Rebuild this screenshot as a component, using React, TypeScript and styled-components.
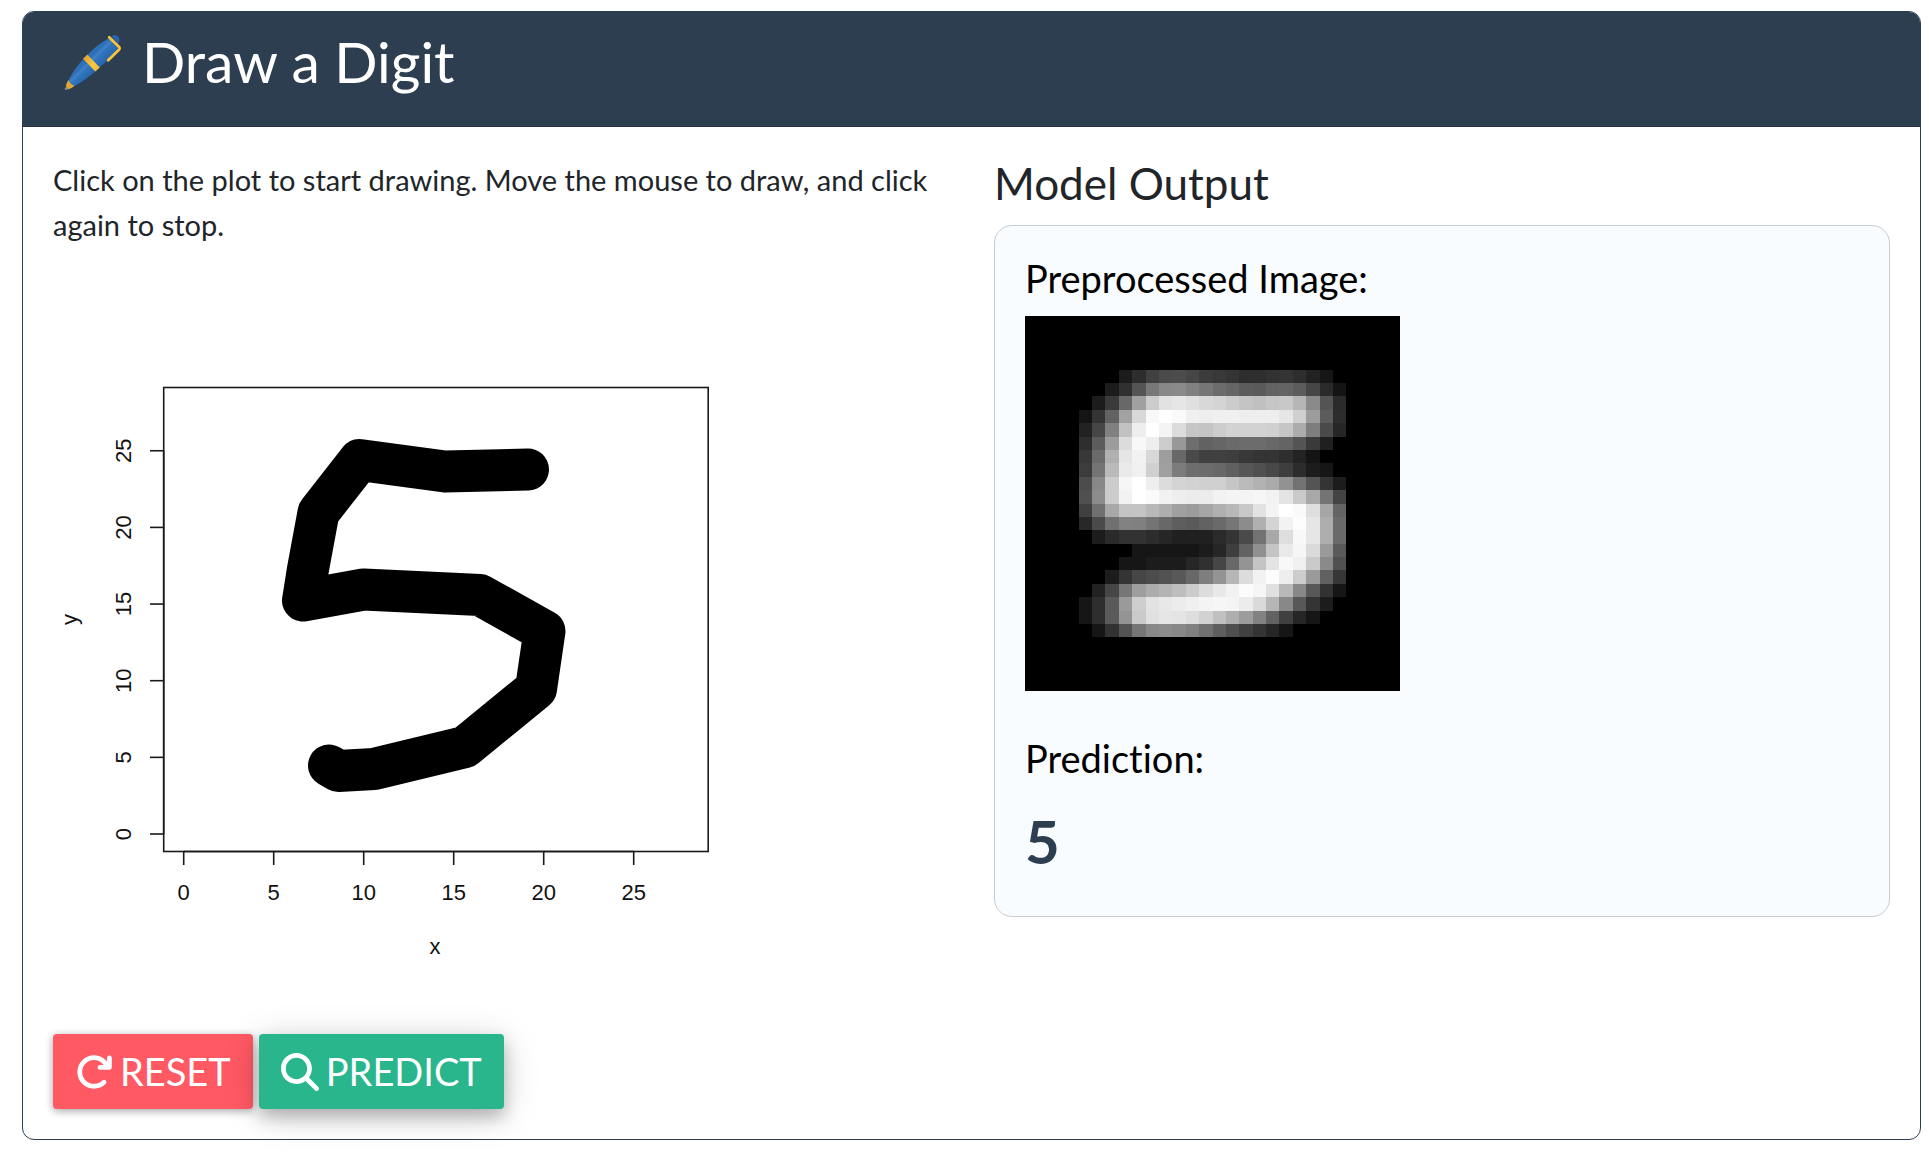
import React from "react";
import styled, { createGlobalStyle } from "styled-components";
import { FaArrowRotateRight, FaMagnifyingGlass } from "react-icons/fa6";

const GlobalStyle = createGlobalStyle`
  *, *::before, *::after { box-sizing: border-box; }
  body {
    margin: 0;
    background: #ffffff;
    color: #212529;
    font-family: Lato, "Open Sans", sans-serif;
    font-size: 29px;
    font-variant-ligatures: none;
    line-height: 45px;
  }
`;

const Page = styled.main`
  padding: 11px 8px 12px 22px;
`;

const Card = styled.section`
  border: 1px solid #2c3e50;
  border-radius: 12px;
`;

const CardHeader = styled.header`
  display: flex;
  align-items: center;
  gap: 18px;
  padding: 16px 37px 31px;
  border-bottom: 1px solid #263445;
  border-radius: 11px 11px 0 0;
  background: #2c3e50;
  color: #ffffff;
`;

const Title = styled.h1`
  margin: 0;
  font-size: 57px;
  font-weight: 400;
  line-height: 67px;
`;

const CardBody = styled.div`
  display: grid;
  grid-template-columns: repeat(2, minmax(0, 1fr));
  column-gap: 45px;
  padding: 30px;

  @media (max-width: 1000px) {
    grid-template-columns: minmax(0, 1fr);
    row-gap: 45px;
  }
`;

const Hint = styled.p`
  margin: 0 0 30px;
`;

const Plot = styled.svg`
  display: block;
  width: 100%;
  max-width: 712px;
  margin-bottom: 45px;
  cursor: crosshair;

  text {
    font-family: "Liberation Sans", Arial, sans-serif;
    font-size: 22px;
    text-anchor: middle;
    fill: #111111;
  }
`;

const Actions = styled.div`
  display: flex;
  flex-wrap: wrap;
  gap: 6px;
`;

const ActionButton = styled.button<{ $color: string; $raised?: boolean }>`
  display: flex;
  align-items: center;
  gap: 7px;
  padding: 15px 22px;
  border: 0;
  border-radius: 4px;
  background: ${(p) => p.$color};
  color: #ffffff;
  font-family: inherit;
  font-size: 38px;
  line-height: 45px;
  text-transform: uppercase;
  cursor: pointer;
  box-shadow: ${(p) =>
    p.$raised
      ? "0 8px 16px rgba(0, 0, 0, 0.22), 0 6px 36px rgba(0, 0, 0, 0.18)"
      : "0 2px 9px rgba(0, 0, 0, 0.36)"};
`;

const OutputHeading = styled.h2`
  margin: 0 0 16px;
  font-size: 44px;
  font-weight: 400;
  line-height: 52px;
`;

const Panel = styled.div`
  padding: 30px 30px 39px;
  border: 1px solid #c8ccd0;
  border-radius: 18px;
  background: #f8fcff;
  color: #000000;
`;

const PanelLabel = styled.h3`
  margin: 0;
  font-size: 38px;
  font-weight: 400;
  line-height: 45px;
`;

const DigitImage = styled.svg`
  display: block;
  width: 375px;
  max-width: 100%;
  margin: 15px 0 45px;
  background: #000000;
`;

const Result = styled.output`
  display: block;
  margin-top: 24px;
  color: #2c3e50;
  font-size: 60px;
  font-weight: 700;
  line-height: 72px;
`;

const PenIcon = () => (
  <svg width="64" height="64" viewBox="0 0 64 64" aria-hidden="true">
    <defs>
      <linearGradient id="barrel" x1="26" y1="24" x2="40" y2="38" gradientUnits="userSpaceOnUse">
        <stop offset="0" stopColor="#2b6cb5" />
        <stop offset="0.3" stopColor="#2d70b9" />
        <stop offset="0.42" stopColor="#4380c6" />
        <stop offset="0.56" stopColor="#2f74bd" />
        <stop offset="1" stopColor="#2566ac" />
      </linearGradient>
      <linearGradient id="gold" x1="25" y1="27" x2="38" y2="40" gradientUnits="userSpaceOnUse">
        <stop offset="0" stopColor="#e0a52f" />
        <stop offset="0.6" stopColor="#fbc940" />
        <stop offset="1" stopColor="#f0b936" />
      </linearGradient>
    </defs>
    <path d="M6.5 56.5 L9 59 L5.8 60 Q4.2 60 4.8 58.4 Z" fill="#8d8593" />
    <path d="M8.5 50 Q5.6 54 6.2 57.2 L8.4 59.2 Q12 58.6 15 55.6 Z" fill="#dfa735" />
    <path d="M51.5 6.5 Q56 3.5 58.4 7 Q60.6 10 58 13.5 Z" fill="#2566ac" />
    <path
      d="M8.5 50 Q15 38 23.3 29.3 L27.3 25 Q36 15.5 48.6 8.3 L58 18 Q50.5 28.5 39.3 37.7 L35.3 41.3 Q26 50 15 55.8 Q10 54.5 8.5 50 Z"
      fill="url(#barrel)"
    />
    <path d="M27.3 24.6 L39.8 37.6 L35.4 41.6 L23 28.8 Z" fill="url(#gold)" />
    <path
      d="M49.2 7.2 L59.3 17.3 Q60 18.4 59.2 19.4 L48.2 30.2"
      fill="none"
      stroke="#f9c33c"
      strokeWidth="2.8"
      strokeLinejoin="round"
      strokeLinecap="round"
    />
  </svg>
);

const TICKS = [0, 5, 10, 15, 20, 25];
const xAt = (value: number) => 130.7 + value * 18;
const yAt = (value: number) => 557 - value * 15.33;

const STROKE_POINTS =
  "475,192.5 392,194.5 306.5,183 265.5,235.5 255,292 250,323.5 310.5,312.5 427,318 491.5,354 483,412 412,470 321,492 285.5,494 276,488.5";

const DrawingPlot = () => (
  <Plot viewBox="0 0 712 712" role="img" aria-label="Drawing area">
    <rect x="110.7" y="110.5" width="544.5" height="464" fill="none" stroke="#1a1a1a" strokeWidth="1.6" />
    <g stroke="#1a1a1a" strokeWidth="1.6">
      <line x1={xAt(0)} x2={xAt(25)} y1="574.5" y2="574.5" />
      <line x1="110.7" x2="110.7" y1={yAt(0)} y2={yAt(25)} />
      {TICKS.map((t) => (
        <React.Fragment key={t}>
          <line x1={xAt(t)} x2={xAt(t)} y1="574.5" y2="588" />
          <line x1="97" x2="111" y1={yAt(t)} y2={yAt(t)} />
        </React.Fragment>
      ))}
    </g>
    {TICKS.map((t) => (
      <React.Fragment key={t}>
        <text x={xAt(t)} y="623">{t}</text>
        <text transform={`translate(78 ${yAt(t)}) rotate(-90)`}>{t}</text>
      </React.Fragment>
    ))}
    <text x="382" y="677">x</text>
    <text transform="translate(24 342.5) rotate(-90)">y</text>
    <polyline
      points={STROKE_POINTS}
      fill="none"
      stroke="#000000"
      strokeWidth="42"
      strokeLinecap="round"
      strokeLinejoin="round"
    />
  </Plot>
);

// Grey levels of the 20x20 centre of the 28x28 image, two hex digits per pixel.
const DIGIT_ROWS = [
  "0000001c2d404a4c463c38342e2e32342e221600",
  "00001c305478888a80766c665c5a62645c462a14",
  "001c3a68a0cce2e6e0d8d4ccc4c0c6c8b68a542a",
  "143462a2d8f8fffaf0eef0f0eeeeeee6d09c5c2c",
  "224680c2eefff4dcc6c4ccd2d2d2d0c6ac7e4a26",
  "2e5c9cdcf8eecc986e62666a6c6c6864543a2000",
  "386ab0e6f2d89e684a40403e3834342e22140000",
  "3c74baeaf0d0a07c6e6c68605650483e2c1c1600",
  "4c88ccf6ffeedcd4d2d0d0c6bab2aa927254341c",
  "508cccf2fffaf2eeececf2f4f4f6f2e4caa87444",
  "4070a8c4c4b8aea09ca6b0b8c8e2f4fffadea664",
  "284a70828074685e5a626a768cb0d4f2fde6ae6a",
  "001c2a32322c262020202a344a72a8def8e6ae6a",
  "0000000016161616161c263e6290c4eaf6da9a5a",
  "00000016161c1c1c2630466894c4e4f8f0ca8a50",
  "00001c34464c5258687e94b6dcf2fceecc9a6036",
  "002246769eacb4beccdce8f2fcf6e0b888583216",
  "162e5a9acee2e8ecf0f4f6f4ecdab68858341c00",
  "162e5a94cae0e6e4ded2c0ae9c82624026160000",
  "0016325476888c8880705e4e4034261600000000",
];

const PreprocessedDigit = () => (
  <DigitImage viewBox="0 0 28 28" shapeRendering="crispEdges" role="img" aria-label="Preprocessed digit">
    {DIGIT_ROWS.flatMap((row, y) =>
      (row.match(/../g) ?? []).map((level, x) =>
        level === "00" ? null : (
          <rect key={`${x}-${y}`} x={x + 4} y={y + 4} width="1" height="1" fill={`#${level}${level}${level}`} />
        )
      )
    )}
  </DigitImage>
);

export default function App() {
  return (
    <>
      <GlobalStyle />
      <Page>
        <Card>
          <CardHeader>
            <PenIcon />
            <Title>Draw a Digit</Title>
          </CardHeader>
          <CardBody>
            <div>
              <Hint>
                Click on the plot to start drawing. Move the mouse to draw, and click again to stop.
              </Hint>
              <DrawingPlot />
              <Actions>
                <ActionButton type="button" $color="#ff5964">
                  <FaArrowRotateRight aria-hidden="true" />
                  Reset
                </ActionButton>
                <ActionButton type="button" $color="#29b68c" $raised>
                  <FaMagnifyingGlass aria-hidden="true" />
                  Predict
                </ActionButton>
              </Actions>
            </div>
            <div>
              <OutputHeading>Model Output</OutputHeading>
              <Panel>
                <PanelLabel>Preprocessed Image:</PanelLabel>
                <PreprocessedDigit />
                <PanelLabel>Prediction:</PanelLabel>
                <Result>5</Result>
              </Panel>
            </div>
          </CardBody>
        </Card>
      </Page>
    </>
  );
}
